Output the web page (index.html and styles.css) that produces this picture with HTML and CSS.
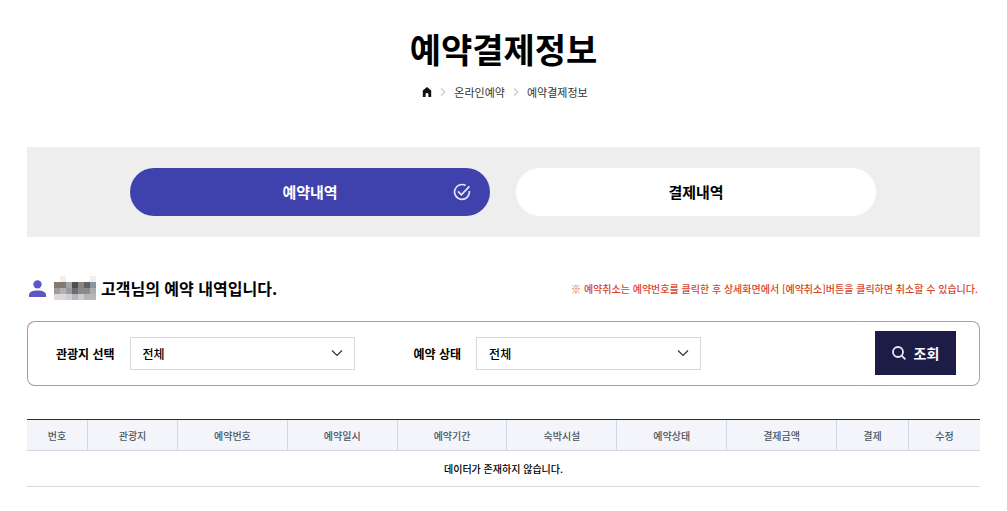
FILE: index.html
```html
<!DOCTYPE html>
<html lang="ko">
<head>
  <meta charset="UTF-8">
  <meta name="viewport" content="width=device-width, initial-scale=1">
  <title>예약결제정보</title>
  <link rel="stylesheet" href="styles.css">
</head>
<body>

  <!-- Page title -->
  <header class="page-head">
    <h1>예약결제정보</h1>
    <nav class="breadcrumb" aria-label="breadcrumb">
      <a href="#" aria-label="홈">
        <svg class="icon-home" viewBox="0 0 10 10"><path d="M5 0 L9.2 3.6 V10 H6.4 V7.4 Q6.4 6 5 6 Q3.6 6 3.6 7.4 V10 H.8 V3.6 Z" fill="#111"/></svg>
      </a>
      <svg class="icon-sep" viewBox="0 0 6 8"><path d="M1 .5 L4.8 4 L1 7.5" fill="none" stroke="#ccc" stroke-width="1.3"/></svg>
      <a href="#">온라인예약</a>
      <svg class="icon-sep" viewBox="0 0 6 8"><path d="M1 .5 L4.8 4 L1 7.5" fill="none" stroke="#ccc" stroke-width="1.3"/></svg>
      <a href="#">예약결제정보</a>
    </nav>
  </header>

  <main class="container">
    <!-- Tabs -->
    <div class="tabs">
      <a href="#" class="tab active">예약내역
        <svg class="icon-check" viewBox="0 0 18 18" fill="none" stroke="#e6e6fa" stroke-width="1.7"><path d="M12.6 2.5 A7.4 7.4 0 1 0 16.3 8"/><path d="M5 8.4 L8.4 11.8 L16.4 3.4"/></svg>
      </a>
      <a href="#" class="tab">결제내역</a>
    </div>

    <!-- Customer -->
    <div class="customer">
      <h2>
        <svg class="icon-user" viewBox="0 0 18 18" fill="#5b57c7"><circle cx="9" cy="4.6" r="4.4"/><path d="M0 18 V15.5 C0 12.5 4 11 9 11 C14 11 18 12.5 18 15.5 V18 Z"/></svg>
        <svg class="name-mask" viewBox="0 0 7 4" preserveAspectRatio="none" shape-rendering="crispEdges">
          <path fill="#f0efee" d="M1 0h1v1H1zM6 0h1v1H6z"/>
          <path fill="#857973" d="M0 1h2v1H0z"/><path fill="#a5a5a6" d="M2 1h1v1H2z"/><path fill="#4a4d52" d="M3 1h1v1H3z"/><path fill="#8a8581" d="M4 1h1v1H4z"/><path fill="#62605f" d="M5 1h1v1H5z"/><path fill="#8495a4" d="M6 1h1v1H6z"/>
          <path fill="#a19c9b" d="M0 2h1v1H0z"/><path fill="#b3b1b1" d="M1 2h1v1H1z"/><path fill="#9a9b9e" d="M2 2h1v1H2z"/><path fill="#6a6d73" d="M3 2h1v1H3z"/><path fill="#8f8a88" d="M4 2h2v1H4z"/><path fill="#a9adb0" d="M6 2h1v1H6z"/>
          <path fill="#dcd8d6" d="M0 3h2v1H0z"/><path fill="#cfcfd0" d="M2 3h1v1H2z"/><path fill="#b5b7ba" d="M3 3h1v1H3z"/><path fill="#cbcccd" d="M4 3h1v1H4z"/><path fill="#b4b6b8" d="M5 3h2v1H5z"/>
        </svg>
        <span>고객님의 예약 내역입니다.</span>
      </h2>
      <p class="notice">※ 예약취소는 예약번호를 클릭한 후 상세화면에서 [예약취소]버튼을 클릭하면 취소할 수 있습니다.</p>
    </div>

    <!-- Search form -->
    <form class="search">
      <div class="field">
        <label for="place">관광지 선택</label>
        <select id="place"><option>전체</option></select>
      </div>
      <div class="field">
        <label for="status">예약 상태</label>
        <select id="status"><option>전체</option></select>
      </div>
      <button type="button">
        <svg class="icon-search" viewBox="0 0 14 14" fill="none" stroke="#e8e8f5" stroke-width="1.8"><circle cx="6" cy="6" r="5"/><path d="M9.8 9.8 L13.4 13.4"/></svg>
        조회
      </button>
    </form>

    <!-- Reservation list -->
    <table class="list">
      <colgroup>
        <col class="col-no"><col class="col-place"><col><col><col><col><col><col><col class="col-pay"><col class="col-edit">
      </colgroup>
      <thead>
        <tr>
          <th>번호</th>
          <th>관광지</th>
          <th>예약번호</th>
          <th>예약일시</th>
          <th>예약기간</th>
          <th>숙박시설</th>
          <th>예약상태</th>
          <th>결제금액</th>
          <th>결제</th>
          <th>수정</th>
        </tr>
      </thead>
      <tbody>
        <tr>
          <td colspan="10">데이터가 존재하지 않습니다.</td>
        </tr>
      </tbody>
    </table>
  </main>

</body>
</html>
```
FILE: styles.css
```css
* {
  box-sizing: border-box;
}
body {
  margin: 0;
  background: #fff;
  color: #000;
  font-family: "Noto Sans CJK KR", sans-serif;
  font-size: 11px;
}
a {
  color: inherit;
  text-decoration: none;
}
h1, h2, p {
  margin: 0;
}
svg {
  display: block;
  flex: none;
}

/* Page title */
.page-head {
  padding-top: 25px;
}
.page-head h1 {
  font-size: 34px;
  font-weight: 700;
  line-height: 48px;
  text-align: center;
}
.breadcrumb {
  display: flex;
  justify-content: center;
  align-items: center;
  gap: 8px;
  margin-top: 11px;
  padding-left: 3px;
  line-height: 16px;
  color: #333;
}
.icon-home {
  width: 10px;
  height: 10px;
}
.icon-sep {
  width: 6px;
  height: 8px;
}

.container {
  padding: 0 27px;
}

/* Tabs */
.tabs {
  display: flex;
  gap: 26px;
  margin-top: 47px;
  padding: 21px 104px 21px 103px;
  background: #eee;
}
.tab {
  position: relative;
  flex: 1;
  border-radius: 24px;
  background: #fff;
  font-size: 15px;
  font-weight: 700;
  line-height: 48px;
  text-align: center;
}
.tab.active {
  background: #3f41ad;
  color: #fff;
}
.icon-check {
  position: absolute;
  top: 15px;
  right: 19px;
  width: 18px;
  height: 18px;
}

/* Customer */
.customer {
  display: flex;
  justify-content: space-between;
  align-items: center;
  margin-top: 35px;
  padding: 0 2px;
}
.customer h2 {
  display: flex;
  align-items: center;
  font-size: 16px;
  font-weight: 700;
  line-height: 32px;
}
.icon-user {
  width: 17px;
  height: 17px;
}
.name-mask {
  width: 42px;
  height: 24px;
  margin: 0 5px 0 8px;
}
.notice {
  color: #d8431f;
  font-size: 10px;
  font-weight: 500;
}

/* Search form */
.search {
  display: flex;
  align-items: center;
  margin-top: 17px;
  padding: 9px 23px 10px 28px;
  border: 1px solid transparent;
  border-radius: 8px;
  background: linear-gradient(#fff, #fff) padding-box, linear-gradient(90deg, #c78a9a, #93a9bd) border-box;
}
.field {
  display: flex;
  align-items: center;
  gap: 15px;
  margin-right: 59px;
}
.field label {
  font-size: 12px;
  font-weight: 700;
}
.field select {
  width: 225px;
  height: 33px;
  padding: 0 12px;
  border: 1px solid #d6d8dc;
  border-radius: 0;
  appearance: none;
  background: #fff url("data:image/svg+xml,%3Csvg xmlns='http://www.w3.org/2000/svg' viewBox='0 0 12 8'%3E%3Cpath d='M1 1.5 L6 6.5 L11 1.5' fill='none' stroke='%23333' stroke-width='1.2'/%3E%3C/svg%3E") no-repeat right 11px center / 12px 8px;
  color: #000;
  font-family: inherit;
  font-size: 12px;
  font-weight: 500;
}
.search button {
  display: flex;
  justify-content: center;
  align-items: center;
  gap: 8px;
  width: 81px;
  height: 44px;
  margin-left: auto;
  padding: 0;
  border: 0;
  background: #1d1c46;
  color: #fff;
  font-family: inherit;
  font-size: 14px;
  font-weight: 700;
}
.icon-search {
  width: 14px;
  height: 14px;
}

/* Reservation list */
.list {
  width: 100%;
  margin-top: 33px;
  border-collapse: separate;
  border-spacing: 0;
  table-layout: fixed;
  border-top: 1px solid #2a2a63;
  font-size: 10px;
  text-align: center;
}
.col-no {
  width: 61px;
}
.col-place {
  width: 90px;
}
.col-pay {
  width: 72px;
}
.col-edit {
  width: 71px;
}
.list th {
  height: 31px;
  padding: 0;
  border-right: 1px solid #d0d7e2;
  border-bottom: 1px solid #d0d7e2;
  background: #f3f5fa;
  color: #4a5560;
  font-weight: 500;
}
.list th:last-child {
  border-right: 0;
}
.list td {
  height: 36px;
  padding: 0;
  border-bottom: 1px solid #d9dbe0;
  font-weight: 500;
}
```
